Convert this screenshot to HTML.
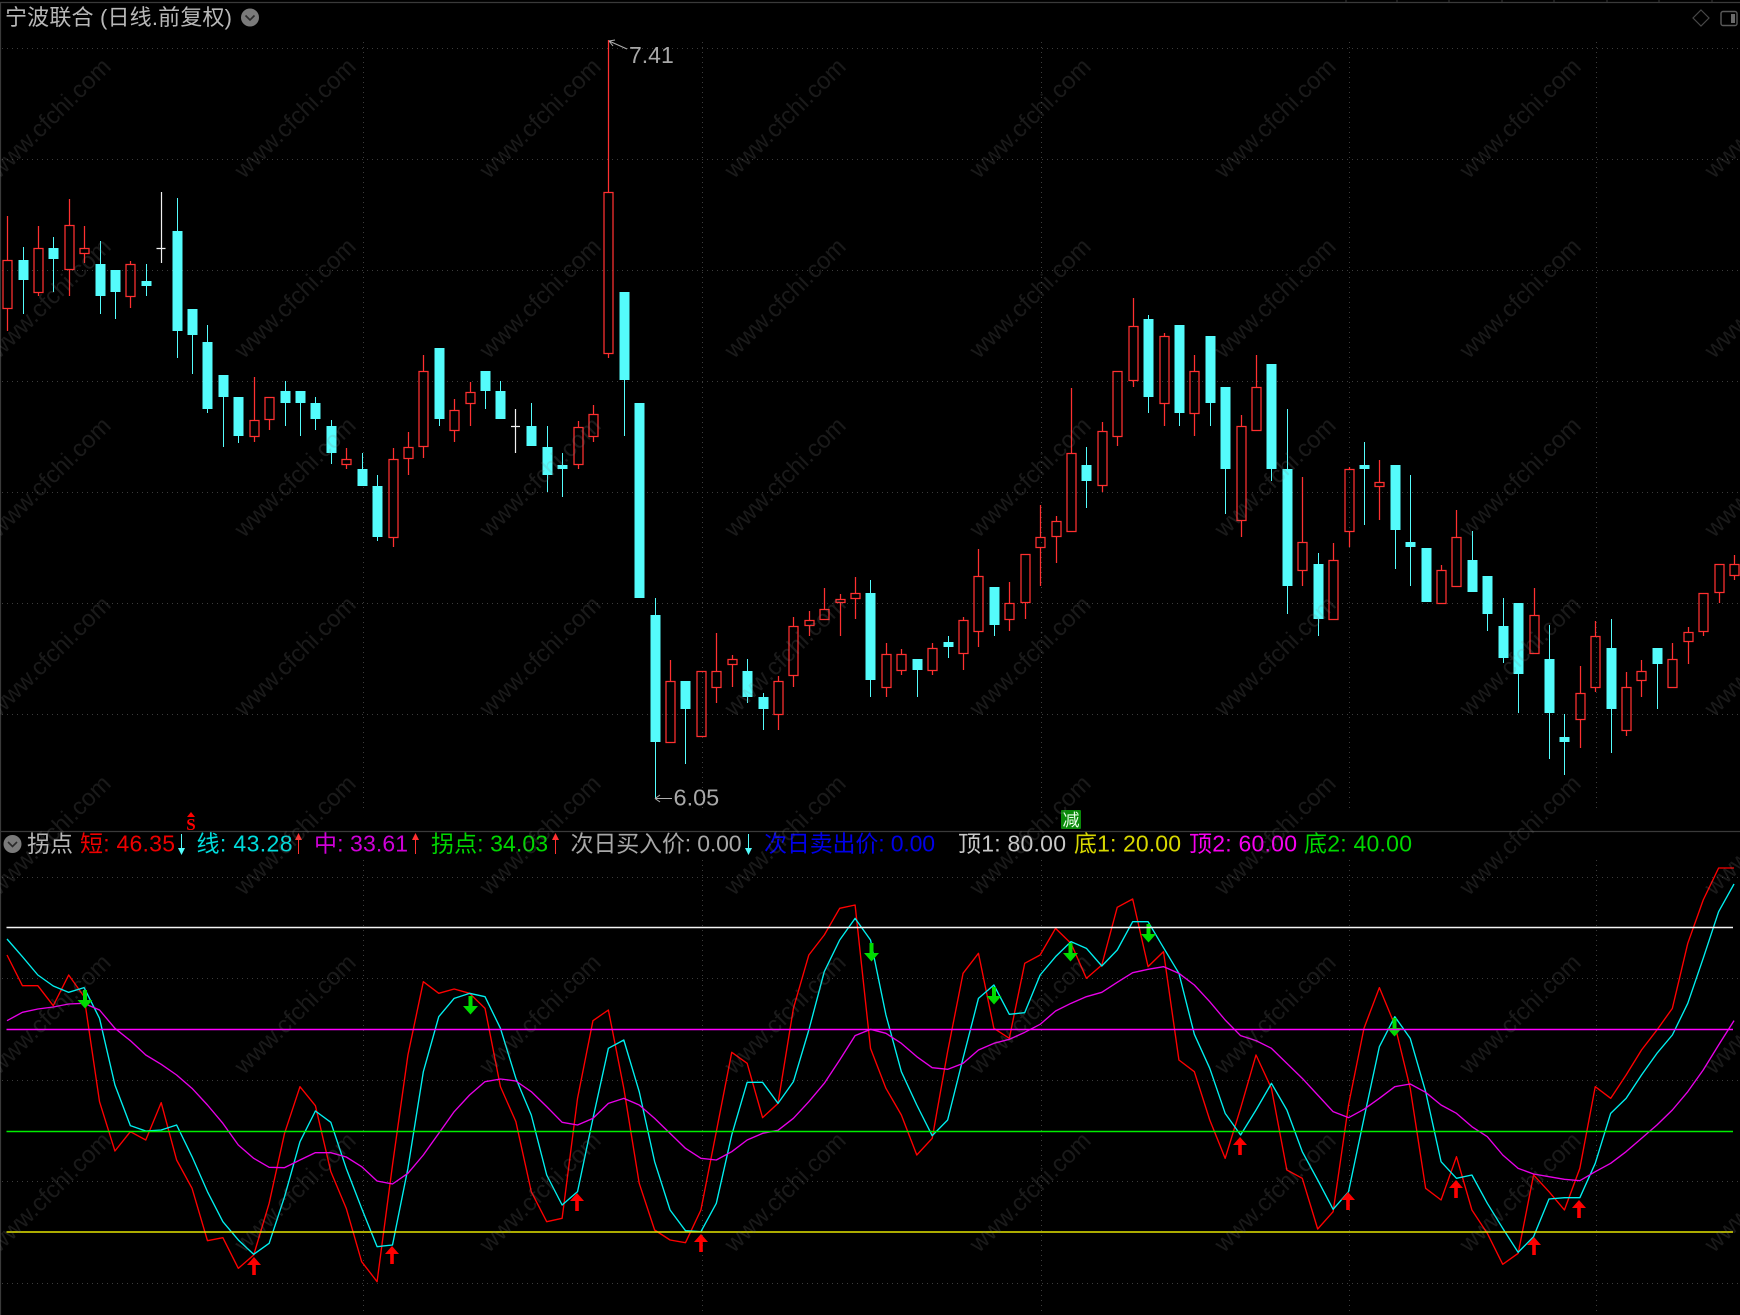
<!DOCTYPE html>
<html><head><meta charset="utf-8"><title>宁波联合</title>
<style>
html,body{margin:0;padding:0;background:#000;width:1740px;height:1315px;overflow:hidden}
svg{display:block;position:absolute;left:0;top:0;filter:blur(.3px)}
text{font-family:"Liberation Sans","Noto Sans CJK SC",sans-serif}
.l{font-size:23px}
.w text{font-size:24px;fill:rgba(128,128,128,.2);text-anchor:middle}
.n{vector-effect:non-scaling-stroke;fill:none;stroke-width:1.35;stroke-linejoin:round}
</style></head><body>
<svg width="1740" height="1315" viewBox="0 0 1740 1315" xmlns="http://www.w3.org/2000/svg">
<rect width="1740" height="1315" fill="#000"/>
<!-- frame -->
<path d="M0 2.5H1740M.5 2V1315M0 831.5H1740" stroke="#3a3a3a" stroke-width="1.2" fill="none"/>
<path d="M1346 0V3M1397 0V3M1449 0V3M1502 0V3M1554 0V3M1607 0V3M1659 0V3M1712 0V3" stroke="#3a3a3a" fill="none"/>
<!-- grid -->
<g stroke="#3c3c3c" stroke-dasharray="1 4" fill="none">
<path d="M2 48.5H1740M2 159.5H1740M2 270.5H1740M2 381.5H1740M2 492.5H1740M2 603.5H1740M2 714.5H1740"/>
<path d="M2 877.5H1740M2 978.5H1740M2 1080.5H1740M2 1181.5H1740M2 1283.5H1740"/>
<path d="M363.5 42V810M702.5 42V810M1041.5 42V810M1349.5 42V810M1596.5 42V810"/>
<path d="M363.5 860V1315M702.5 860V1315M1041.5 860V1315M1349.5 860V1315M1596.5 860V1315"/>
</g>
<!-- red candles -->
<path fill="none" stroke="#ff3030" stroke-width="1.25" d="M7.5 216V260M7.5 309V331M3 260.5h9V308.5h-9zM38.5 226V248M38.5 293V296M34 248.5h9V292.5h-9zM69.5 199V225M69.5 270V296M65 225.5h9V269.5h-9zM84.5 226V248M84.5 254V263M80 248.5h9V253.5h-9zM130.5 261V264M130.5 297V308M126 264.5h9V296.5h-9zM254.5 377V420M254.5 437V442M250 420.5h9V436.5h-9zM269.5 420V430M265 397.5h9V419.5h-9zM346.5 448V459M346.5 465V469M342 459.5h9V464.5h-9zM393.5 448V459M393.5 538V547M389 459.5h9V537.5h-9zM408.5 432V447M408.5 459V475M404 447.5h9V458.5h-9zM423.5 355V371M423.5 447V458M419 371.5h9V446.5h-9zM454.5 399V410M454.5 431V442M450 410.5h9V430.5h-9zM470.5 382V392M470.5 404V426M466 392.5h9V403.5h-9zM578.5 421V427M578.5 465V469M574 427.5h9V464.5h-9zM593.5 405V414M593.5 437V442M589 414.5h9V436.5h-9zM608.5 40V192M608.5 354V358M604 192.5h9V353.5h-9zM670.5 660V681M666 681.5h9V742.5h-9zM697 671.5h9V736.5h-9zM716.5 633V671M716.5 688V703M712 671.5h9V687.5h-9zM732.5 655V659M732.5 665V687M728 659.5h9V664.5h-9zM778.5 676V681M778.5 715V730M774 681.5h9V714.5h-9zM793.5 617V626M793.5 676V687M789 626.5h9V675.5h-9zM809.5 611V620M809.5 626V636M805 620.5h9V625.5h-9zM824.5 588V609M820 609.5h9V619.5h-9zM840.5 594V599M840.5 603V636M836 599.5h9V602.5h-9zM855.5 577V593M855.5 599V619M851 593.5h9V598.5h-9zM886.5 643V654M886.5 688V697M882 654.5h9V687.5h-9zM901.5 649V654M901.5 671V675M897 654.5h9V670.5h-9zM932.5 643V648M932.5 671V675M928 648.5h9V670.5h-9zM963.5 617V620M963.5 654V670M959 620.5h9V653.5h-9zM978.5 549V576M978.5 632V647M974 576.5h9V631.5h-9zM1009.5 582V603M1009.5 620V631M1005 603.5h9V619.5h-9zM1025.5 603V619M1021 554.5h9V602.5h-9zM1040.5 505V537M1040.5 548V586M1036 537.5h9V547.5h-9zM1056.5 516V521M1056.5 537V563M1052 521.5h9V536.5h-9zM1071.5 388V453M1067 453.5h9V531.5h-9zM1102.5 422V431M1102.5 486V492M1098 431.5h9V485.5h-9zM1117.5 437V446M1113 371.5h9V436.5h-9zM1133.5 298V326M1133.5 381V387M1129 326.5h9V380.5h-9zM1164.5 333V336M1164.5 404V426M1160 336.5h9V403.5h-9zM1194.5 355V371M1194.5 414V436M1190 371.5h9V413.5h-9zM1241.5 415V426M1241.5 521V537M1237 426.5h9V520.5h-9zM1256.5 355V387M1252 387.5h9V430.5h-9zM1302.5 477V542M1302.5 571V586M1298 542.5h9V570.5h-9zM1333.5 543V560M1329 560.5h9V619.5h-9zM1349.5 467V469M1349.5 532V547M1345 469.5h9V531.5h-9zM1379.5 460V482M1379.5 487V520M1375 482.5h9V486.5h-9zM1441.5 565V570M1437 570.5h9V603.5h-9zM1456.5 510V537M1452 537.5h9V586.5h-9zM1534.5 588V615M1530 615.5h9V653.5h-9zM1580.5 666V693M1580.5 720V748M1576 693.5h9V719.5h-9zM1595.5 621V636M1595.5 688V692M1591 636.5h9V687.5h-9zM1626.5 672V687M1626.5 731V736M1622 687.5h9V730.5h-9zM1641.5 660V671M1641.5 681V697M1637 671.5h9V680.5h-9zM1672.5 643V659M1668 659.5h9V687.5h-9zM1688.5 627V632M1688.5 642V664M1684 632.5h9V641.5h-9zM1703.5 632V636M1699 593.5h9V631.5h-9zM1719.5 593V603M1715 564.5h9V592.5h-9zM1734.5 555V564M1734.5 576V580M1730 564.5h9V575.5h-9z"/>
<!-- cyan candles -->
<path fill="#54fcfc" stroke="#54fcfc" d="M23.5 247V314M19 260.5h9V279.5h-9zM53.5 237V292M49 248.5h9V258.5h-9zM100.5 241V314M96 264.5h9V295.5h-9zM115.5 270V319M111 270.5h9V291.5h-9zM146.5 264V296M142 281.5h9V285.5h-9zM177.5 198V358M173 231.5h9V330.5h-9zM192.5 309V374M188 309.5h9V334.5h-9zM207.5 325V413M203 342.5h9V408.5h-9zM223.5 375V447M219 375.5h9V396.5h-9zM238.5 397V443M234 397.5h9V435.5h-9zM285.5 381V426M281 391.5h9V402.5h-9zM300.5 391V436M296 391.5h9V402.5h-9zM315.5 397V430M311 403.5h9V418.5h-9zM331.5 420V464M327 426.5h9V452.5h-9zM362.5 453V486M358 469.5h9V485.5h-9zM377.5 475V541M373 486.5h9V536.5h-9zM439.5 348V426M435 348.5h9V418.5h-9zM485.5 371V409M481 371.5h9V390.5h-9zM500.5 381V419M496 391.5h9V418.5h-9zM531.5 403V446M527 426.5h9V445.5h-9zM547.5 426V492M543 447.5h9V474.5h-9zM562.5 453V497M558 465.5h9V468.5h-9zM624.5 292V436M620 292.5h9V379.5h-9zM639.5 403V598M635 403.5h9V597.5h-9zM655.5 598V798M651 615.5h9V741.5h-9zM685.5 681V764M681 681.5h9V708.5h-9zM747.5 659V703M743 671.5h9V696.5h-9zM763.5 693V730M759 697.5h9V708.5h-9zM870.5 580V697M866 593.5h9V679.5h-9zM917.5 659V697M913 659.5h9V669.5h-9zM948.5 636V658M944 642.5h9V646.5h-9zM994.5 587V636M990 587.5h9V624.5h-9zM1086.5 447V508M1082 465.5h9V480.5h-9zM1148.5 315V413M1144 319.5h9V396.5h-9zM1179.5 325V426M1175 325.5h9V412.5h-9zM1210.5 336V426M1206 336.5h9V402.5h-9zM1225.5 387V514M1221 387.5h9V468.5h-9zM1271.5 364V481M1267 364.5h9V468.5h-9zM1287.5 409V614M1283 469.5h9V585.5h-9zM1318.5 553V636M1314 564.5h9V618.5h-9zM1364.5 442V525M1360 465.5h9V468.5h-9zM1395.5 465V569M1391 465.5h9V529.5h-9zM1410.5 475V586M1406 542.5h9V546.5h-9zM1426.5 548V602M1422 548.5h9V601.5h-9zM1472.5 531V592M1468 560.5h9V591.5h-9zM1487.5 576V631M1483 576.5h9V613.5h-9zM1503.5 598V663M1499 626.5h9V657.5h-9zM1518.5 603V713M1514 603.5h9V673.5h-9zM1549.5 625V759M1545 659.5h9V712.5h-9zM1564.5 714V775M1560 737.5h9V741.5h-9zM1611.5 619V753M1607 648.5h9V708.5h-9zM1657.5 648V709M1653 648.5h9V663.5h-9z"/>
<!-- white doji -->
<path stroke="#f0f0f0" stroke-width="1.2" fill="none" d="M161.5 192V263M156.5 248.5H165.5M515.5 409V453M511 426.5H520"/>
<!-- hi/lo -->
<path stroke="#b0b0b0" fill="none" d="M609 41L627 49M609 41L615 40M609 41L613 46M655 798.5H672M655 798.5L660 795M655 798.5L660 802"/>
<text x="629" y="63" font-size="23" fill="#a8a8a8">7.41</text>
<text x="673.500" y="805.500" font-size="23.500" fill="#a8a8a8">6.05</text>
<!-- S marker, 减 -->
<path fill="#f00" d="M191 812L195 817H187Z"/>
<text x="191" y="830" font-size="17" font-weight="bold" fill="#f00" text-anchor="middle" style="font-family:'Liberation Serif',serif">S</text>
<rect x="1061" y="810" width="20" height="19" rx="1" fill="#0a8a0a"/>
<text x="1071" y="826" font-size="17" fill="#e8ffe8" text-anchor="middle">减</text>
<!-- lower curves -->
<g transform="translate(7,875) scale(15.42,.33333)">
<polyline class="n" stroke="#ff0000" points="0,240 1,332 2,332 3,392 4,300 5,365 6,680 7,828 8,770 9,795 10,683 11,855 12,940 13,1097 14,1088 15,1180 16,1140 17,985 18,775 19,635 20,692 21,890 22,1000 23,1160 24,1220 25,870 26,540 27,320 28,355 29,342 30,355 31,400 32,635 33,740 34,950 35,1040 36,1030 37,670 38,437 39,405 40,640 41,925 42,1065 43,1095 44,1103 45,1005 46,770 47,532 48,565 49,728 50,685 51,400 52,240 53,180 54,100 55,90 56,520 57,640 58,720 59,840 60,790 61,530 62,295 63,235 64,460 65,490 66,265 67,240 68,160 69,205 70,310 71,270 72,97 73,72 74,275 75,230 76,555 77,590 78,735 79,850 80,700 81,540 82,640 83,885 84,910 85,1062 86,1010 87,690 88,460 89,338 90,450 91,640 92,940 93,975 94,845 95,1005 96,1075 97,1168 98,1135 99,900 100,950 101,1005 102,880 103,635 104,670 105,600 106,525 107,465 108,400 109,205 110,75 111,-21 112,-21"/>
<polyline class="n" stroke="#00f0f0" points="0,192 1,245 2,300 3,333 4,352 5,338 6,430 7,630 8,752 9,768 10,765 11,750 12,845 13,950 14,1040 15,1095 16,1138 17,1105 18,965 19,800 20,708 21,742 22,880 23,1000 24,1115 25,1110 26,880 27,590 28,425 29,370 30,355 31,365 32,460 33,610 34,720 35,900 36,990 37,950 38,730 39,520 40,495 41,650 42,860 43,1005 44,1067 45,1070 46,985 47,780 48,622 49,622 50,685 51,620 52,465 53,290 54,195 55,130 56,195 57,420 58,590 59,690 60,782 61,735 62,550 63,370 64,330 65,418 66,413 67,300 68,245 69,200 70,220 71,273 72,225 73,140 74,140 75,218 76,295 77,478 78,580 79,715 80,780 81,705 82,625 83,705 84,830 85,915 86,1003 87,950 88,730 89,515 90,425 91,490 92,650 93,860 94,910 95,900 96,985 97,1060 98,1132 99,1085 100,972 101,968 102,968 103,865 104,715 105,670 106,600 107,535 108,480 109,385 110,250 111,110 112,27"/>
<polyline class="n" stroke="#e800e8" points="0,437 1,412 2,402 3,396 4,387 5,385 6,405 7,460 8,497 9,540 10,568 11,600 12,640 13,690 14,745 15,810 16,850 17,877 18,878 19,855 20,833 21,833 22,846 23,875 24,918 25,927 26,895 27,840 28,775 29,710 30,660 31,620 32,612 33,618 34,650 35,695 36,742 37,750 38,730 39,685 40,670 41,690 42,730 43,775 44,820 45,850 46,855 47,830 48,795 49,775 50,766 51,730 52,680 53,625 54,555 55,482 56,463 57,475 58,505 59,545 60,578 61,583 62,565 63,525 64,505 65,493 66,472 67,448 68,408 69,385 70,365 71,352 72,322 73,293 74,283 75,275 76,295 77,330 78,380 79,435 80,482 81,497 82,520 83,565 84,610 85,660 86,710 87,728 88,703 89,670 90,635 91,627 92,652 93,690 94,715 95,755 96,785 97,840 98,880 99,897 100,905 101,913 102,917 103,890 104,865 105,830 106,790 107,750 108,705 109,650 110,585 111,510 112,437"/>
</g>
<!-- signal arrows -->
<g fill="#ff0000">
<path d="M247 1265L254 1257L261 1265H255.800V1275H252.200V1265Z"/>
<path d="M385 1254L392 1246L399 1254H393.800V1264H390.200V1254Z"/>
<path d="M570 1201L577 1193L584 1201H578.800V1211H575.200V1201Z"/>
<path d="M694 1242L701 1234L708 1242H702.800V1252H699.200V1242Z"/>
<path d="M1233 1145L1240 1137L1247 1145H1241.800V1155H1238.200V1145Z"/>
<path d="M1341 1200L1348 1192L1355 1200H1349.800V1210H1346.200V1200Z"/>
<path d="M1449 1188L1456 1180L1463 1188H1457.800V1198H1454.200V1188Z"/>
<path d="M1527 1245L1534 1237L1541 1245H1535.800V1255H1532.200V1245Z"/>
<path d="M1572 1208L1579 1200L1586 1208H1580.800V1218H1577.200V1208Z"/>
</g>
<g fill="#00dc00">
<path d="M83 990H87V1000H92.500L85 1008.500L77.500 1000H83Z"/>
<path d="M468.500 996H472.500V1006H478L470.500 1014.500L463 1006H468.500Z"/>
<path d="M869.500 943H873.500V953H879L871.500 961.500L864 953H869.500Z"/>
<path d="M992 987H996V996H1001.500L994 1004.500L986.500 996H992Z"/>
<path d="M1068.500 943H1072.500V953H1078L1070.500 961.500L1063 953H1068.500Z"/>
<path d="M1146.500 924H1150.500V934H1156L1148.500 942.500L1141 934H1146.500Z"/>
<path d="M1392.500 1018H1396.500V1028H1402L1394.500 1036.500L1387 1028H1392.500Z"/>
</g>
<!-- horizontal levels -->
<g fill="none" stroke-width="1.5">
<path stroke="#f4f4f4" d="M6.500 927.500H1733"/>
<path stroke="#ff00ff" d="M6.500 1029.500H1733"/>
<path stroke="#00ee00" d="M6.500 1131.500H1733"/>
<path stroke="#e4e400" d="M6.500 1232H1733"/>
</g>
<!-- title -->
<text x="5" y="25" font-size="22" fill="#b8b8b8" textLength="227">宁波联合 (日线.前复权)</text>
<circle cx="250" cy="17.500" r="9" fill="#7a7a7a"/>
<path d="M245.500 15.500L250 20L254.500 15.500" fill="none" stroke="#2a2a2a" stroke-width="1.6"/>
<path d="M1701 10L1709 18L1701 26L1693 18Z" fill="none" stroke="#484848" stroke-width="1.2"/>
<rect x="1721" y="11.500" width="16" height="14" rx="2" fill="none" stroke="#5a5a5a" stroke-width="1.4"/>
<rect x="1731" y="14" width="4" height="9" fill="#6a6a6a"/>
<!-- legend -->
<circle cx="12.500" cy="844" r="9" fill="#7a7a7a"/>
<path d="M8 842L12.500 846.500L17 842" fill="none" stroke="#2a2a2a" stroke-width="1.6"/>
<g class="l">
<text class="l" x="27" y="851.500" fill="#b8b8b8" textLength="46">拐点</text>
<text class="l" x="80" y="851.500" fill="#ee0000" textLength="95">短: 46.35</text>
<text class="l" x="196.500" y="851.500" fill="#00dcdc" textLength="96">线: 43.28</text>
<text class="l" x="314" y="851.500" fill="#d000d8" textLength="94">中: 33.61</text>
<text class="l" x="431" y="851.500" fill="#00d800" textLength="117">拐点: 34.03</text>
<text class="l" x="570.500" y="851.500" fill="#a8a8a8" textLength="171">次日买入价: 0.00</text>
<text class="l" x="764" y="851.500" fill="#0000e8" textLength="171">次日卖出价: 0.00</text>
<text class="l" x="958" y="851.500" fill="#c8c8c8" textLength="108">顶1: 80.00</text>
<text class="l" x="1074" y="851.500" fill="#d8d800" textLength="107">底1: 20.00</text>
<text class="l" x="1189" y="851.500" fill="#f800f0" textLength="108">顶2: 60.00</text>
<text class="l" x="1304" y="851.500" fill="#00d800" textLength="108">底2: 40.00</text>
</g>
<!-- legend mini arrows -->
<path d="M181.500 834V849" stroke="#54fcfc" fill="none"/><path d="M178 848H185L181.500 855Z" fill="#54fcfc"/>
<path d="M748.500 834V849" stroke="#54fcfc" fill="none"/><path d="M745 848H752L748.500 855Z" fill="#54fcfc"/>
<path d="M298.500 839V854" stroke="#ff3030" fill="none"/><path d="M295 840H302L298.500 833Z" fill="#ff3030"/>
<path d="M415.500 839V854" stroke="#ff3030" fill="none"/><path d="M412 840H419L415.500 833Z" fill="#ff3030"/>
<path d="M555.500 839V854" stroke="#ff3030" fill="none"/><path d="M552 840H559L555.500 833Z" fill="#ff3030"/>
<!-- watermark -->
<g class="w">
<text transform="translate(50,118) rotate(-44.500)" y="8">www.cfchi.com</text><text transform="translate(295,118) rotate(-44.500)" y="8">www.cfchi.com</text><text transform="translate(540,118) rotate(-44.500)" y="8">www.cfchi.com</text><text transform="translate(785,118) rotate(-44.500)" y="8">www.cfchi.com</text><text transform="translate(1030,118) rotate(-44.500)" y="8">www.cfchi.com</text><text transform="translate(1275,118) rotate(-44.500)" y="8">www.cfchi.com</text><text transform="translate(1520,118) rotate(-44.500)" y="8">www.cfchi.com</text><text transform="translate(1765,118) rotate(-44.500)" y="8">www.cfchi.com</text>
<text transform="translate(50,298) rotate(-44.500)" y="8">www.cfchi.com</text><text transform="translate(295,298) rotate(-44.500)" y="8">www.cfchi.com</text><text transform="translate(540,298) rotate(-44.500)" y="8">www.cfchi.com</text><text transform="translate(785,298) rotate(-44.500)" y="8">www.cfchi.com</text><text transform="translate(1030,298) rotate(-44.500)" y="8">www.cfchi.com</text><text transform="translate(1275,298) rotate(-44.500)" y="8">www.cfchi.com</text><text transform="translate(1520,298) rotate(-44.500)" y="8">www.cfchi.com</text><text transform="translate(1765,298) rotate(-44.500)" y="8">www.cfchi.com</text>
<text transform="translate(50,477) rotate(-44.500)" y="8">www.cfchi.com</text><text transform="translate(295,477) rotate(-44.500)" y="8">www.cfchi.com</text><text transform="translate(540,477) rotate(-44.500)" y="8">www.cfchi.com</text><text transform="translate(785,477) rotate(-44.500)" y="8">www.cfchi.com</text><text transform="translate(1030,477) rotate(-44.500)" y="8">www.cfchi.com</text><text transform="translate(1275,477) rotate(-44.500)" y="8">www.cfchi.com</text><text transform="translate(1520,477) rotate(-44.500)" y="8">www.cfchi.com</text><text transform="translate(1765,477) rotate(-44.500)" y="8">www.cfchi.com</text>
<text transform="translate(50,656) rotate(-44.500)" y="8">www.cfchi.com</text><text transform="translate(295,656) rotate(-44.500)" y="8">www.cfchi.com</text><text transform="translate(540,656) rotate(-44.500)" y="8">www.cfchi.com</text><text transform="translate(785,656) rotate(-44.500)" y="8">www.cfchi.com</text><text transform="translate(1030,656) rotate(-44.500)" y="8">www.cfchi.com</text><text transform="translate(1275,656) rotate(-44.500)" y="8">www.cfchi.com</text><text transform="translate(1520,656) rotate(-44.500)" y="8">www.cfchi.com</text><text transform="translate(1765,656) rotate(-44.500)" y="8">www.cfchi.com</text>
<text transform="translate(50,835) rotate(-44.500)" y="8">www.cfchi.com</text><text transform="translate(295,835) rotate(-44.500)" y="8">www.cfchi.com</text><text transform="translate(540,835) rotate(-44.500)" y="8">www.cfchi.com</text><text transform="translate(785,835) rotate(-44.500)" y="8">www.cfchi.com</text><text transform="translate(1030,835) rotate(-44.500)" y="8">www.cfchi.com</text><text transform="translate(1275,835) rotate(-44.500)" y="8">www.cfchi.com</text><text transform="translate(1520,835) rotate(-44.500)" y="8">www.cfchi.com</text><text transform="translate(1765,835) rotate(-44.500)" y="8">www.cfchi.com</text>
<text transform="translate(50,1014) rotate(-44.500)" y="8">www.cfchi.com</text><text transform="translate(295,1014) rotate(-44.500)" y="8">www.cfchi.com</text><text transform="translate(540,1014) rotate(-44.500)" y="8">www.cfchi.com</text><text transform="translate(785,1014) rotate(-44.500)" y="8">www.cfchi.com</text><text transform="translate(1030,1014) rotate(-44.500)" y="8">www.cfchi.com</text><text transform="translate(1275,1014) rotate(-44.500)" y="8">www.cfchi.com</text><text transform="translate(1520,1014) rotate(-44.500)" y="8">www.cfchi.com</text><text transform="translate(1765,1014) rotate(-44.500)" y="8">www.cfchi.com</text>
<text transform="translate(50,1192) rotate(-44.500)" y="8">www.cfchi.com</text><text transform="translate(295,1192) rotate(-44.500)" y="8">www.cfchi.com</text><text transform="translate(540,1192) rotate(-44.500)" y="8">www.cfchi.com</text><text transform="translate(785,1192) rotate(-44.500)" y="8">www.cfchi.com</text><text transform="translate(1030,1192) rotate(-44.500)" y="8">www.cfchi.com</text><text transform="translate(1275,1192) rotate(-44.500)" y="8">www.cfchi.com</text><text transform="translate(1520,1192) rotate(-44.500)" y="8">www.cfchi.com</text><text transform="translate(1765,1192) rotate(-44.500)" y="8">www.cfchi.com</text>
</g>
</svg>
</body></html>
